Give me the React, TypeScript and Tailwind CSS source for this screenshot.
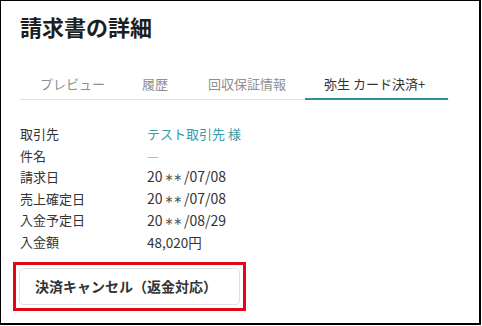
import React from "react";

const font = { fontFamily: '"Noto Sans CJK JP", "Noto Sans", sans-serif' };

function Stars() {
  return (
    <span className="mx-[2px] text-[11px] tracking-[-0.5px] align-[1px] text-[#555]" style={{ fontFamily: '"DejaVu Sans", sans-serif' }}>
      ∗∗
    </span>
  );
}

export default function App() {
  const rows: { label: string; value: React.ReactNode; cls?: string }[] = [
    { label: "取引先", value: "テスト取引先 様", cls: "text-[#3a9aa6]" },
    { label: "件名", value: <span className="text-[#aaa]">—</span> },
    { label: "請求日", value: <>20<Stars />/07/08</>, cls: "text-[14px]" },
    { label: "売上確定日", value: <>20<Stars />/07/08</>, cls: "text-[14px]" },
    { label: "入金予定日", value: <>20<Stars />/08/29</>, cls: "text-[14px]" },
    { label: "入金額", value: "48,020円", cls: "text-[13.5px]" },
  ];
  const tabs = [
    { label: "プレビュー", w: "w-[102px]" },
    { label: "履歴", w: "w-[66px]" },
    { label: "回収保証情報", w: "w-[117px]" },
    { label: "弥生 カード決済+", w: "w-[143px]", active: true },
  ];
  return (
    <div className="w-[482px] h-[326px] bg-white" style={font}>
      <div className="w-[481px] h-[325px] border-l border-t border-r-2 border-b-2 border-black pl-[19px] pt-[10px]">
        <h1 className="text-[22px] leading-[30px] font-bold text-[#1e1e1e]">請求書の詳細</h1>
        <div className="mt-[28px] flex w-[429px] border-b border-[#e2e2e2]">
          {tabs.map((t) => (
            <div
              key={t.label}
              className={
                t.active
                  ? `${t.w} h-[31px] -mb-px pl-[19px] text-[13px] leading-[29px] text-[#333] border-b-2 border-[#2f8f99]`
                  : `${t.w} h-[30px] pl-[20px] text-[13px] leading-[29px] text-[#8f8f8f]`
              }
            >
              {t.label}
            </div>
          ))}
        </div>
        <div className="mt-[23px]">
          {rows.map((r) => (
            <div key={r.label} className="flex items-center h-[21.6px] text-[13px] text-[#333]">
              <div className="w-[127px]">{r.label}</div>
              <div className={r.cls ?? ""}>{r.value}</div>
            </div>
          ))}
        </div>
        <div className="mt-[9px] -ml-[7px] w-[233px] h-[49px] border-[3px] border-[#e3061b] p-[3px]">
          <button className="w-[221px] h-full rounded-[4px] border border-[#dde2e8] bg-white text-left pl-[15px] text-[14px] font-bold text-[#333]">
            決済キャンセル（返金対応）
          </button>
        </div>
      </div>
    </div>
  );
}
